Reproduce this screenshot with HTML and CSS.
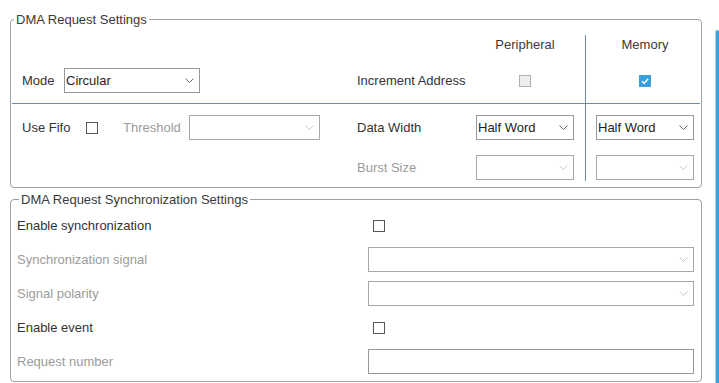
FILE: index.html
```html
<!DOCTYPE html>
<html lang="en">
<head>
    <meta charset="UTF-8">
    <meta name="viewport" content="width=device-width, initial-scale=1.0">
    <title>DMA Request Settings</title>
    <link rel="stylesheet" href="styles.css">
</head>
<body>
    <fieldset class="group dma">
        <legend>DMA Request Settings</legend>
        <div class="dma-grid">
            <!-- header row -->
            <div class="cell c1 r1"></div>
            <div class="cell c2 r1"></div>
            <div class="cell c3 r1 head">Peripheral</div>
            <div class="cell c4 r1 head">Memory</div>

            <!-- mode / increment -->
            <div class="cell c1 r2">
                <span class="lbl mode-lbl">Mode</span>
                <div class="select mode-sel">
                    <span>Circular</span>
                    <svg class="chev" width="9" height="5" viewBox="0 0 9 5"><polyline points="0.5,0.5 4.5,4.5 8.5,0.5"/></svg>
                </div>
            </div>
            <div class="cell c2 r2"><span class="lbl">Increment Address</span></div>
            <div class="cell c3 r2 mid"><span class="check disabled"></span></div>
            <div class="cell c4 r2 mid">
                <span class="check checked">
                    <svg width="12" height="12" viewBox="0 0 12 12"><polyline points="3,6.2 5.2,8.3 9,4"/></svg>
                </span>
            </div>

            <!-- fifo / data width -->
            <div class="cell c1 r3">
                <span class="lbl fifo-lbl">Use Fifo</span>
                <span class="check"></span>
                <span class="lbl muted thr-lbl">Threshold</span>
                <div class="select off thr-sel">
                    <span></span>
                    <svg class="chev" width="9" height="5" viewBox="0 0 9 5"><polyline points="0.5,0.5 4.5,4.5 8.5,0.5"/></svg>
                </div>
            </div>
            <div class="cell c2 r3"><span class="lbl">Data Width</span></div>
            <div class="cell c3 r3">
                <div class="select wide">
                    <span>Half Word</span>
                    <svg class="chev" width="9" height="5" viewBox="0 0 9 5"><polyline points="0.5,0.5 4.5,4.5 8.5,0.5"/></svg>
                </div>
            </div>
            <div class="cell c4 r3">
                <div class="select wide">
                    <span>Half Word</span>
                    <svg class="chev" width="9" height="5" viewBox="0 0 9 5"><polyline points="0.5,0.5 4.5,4.5 8.5,0.5"/></svg>
                </div>
            </div>

            <!-- burst size -->
            <div class="cell c1 r4"></div>
            <div class="cell c2 r4"><span class="lbl muted">Burst Size</span></div>
            <div class="cell c3 r4">
                <div class="select wide off">
                    <span></span>
                    <svg class="chev" width="9" height="5" viewBox="0 0 9 5"><polyline points="0.5,0.5 4.5,4.5 8.5,0.5"/></svg>
                </div>
            </div>
            <div class="cell c4 r4">
                <div class="select wide off">
                    <span></span>
                    <svg class="chev" width="9" height="5" viewBox="0 0 9 5"><polyline points="0.5,0.5 4.5,4.5 8.5,0.5"/></svg>
                </div>
            </div>
        </div>
    </fieldset>

    <fieldset class="group sync">
        <legend>DMA Request Synchronization Settings</legend>
        <div class="sync-grid">
            <span class="lbl">Enable synchronization</span>
            <div class="ctl"><span class="check box-offset"></span></div>

            <span class="lbl muted">Synchronization signal</span>
            <div class="select off full">
                <span></span>
                <svg class="chev" width="9" height="5" viewBox="0 0 9 5"><polyline points="0.5,0.5 4.5,4.5 8.5,0.5"/></svg>
            </div>

            <span class="lbl muted">Signal polarity</span>
            <div class="select off full">
                <span></span>
                <svg class="chev" width="9" height="5" viewBox="0 0 9 5"><polyline points="0.5,0.5 4.5,4.5 8.5,0.5"/></svg>
            </div>

            <span class="lbl">Enable event</span>
            <div class="ctl"><span class="check box-offset"></span></div>

            <span class="lbl muted">Request number</span>
            <div class="text-input"></div>
        </div>
    </fieldset>

    <div class="scrollbar"></div>
</body>
</html>
```

FILE: styles.css
```css
body {
    font-family: "Liberation Sans", Arial, sans-serif;
    font-size: 13px;
    color: #333;
    margin: 0;
    padding: 12px 0 0 10px;
    background: #fff;
}
.group {
    box-sizing: border-box;
    width: 692px;
    margin: 0;
    border: 1px solid #a0a0a0;
    border-radius: 4px;
    min-width: 0;
}
.group legend {
    line-height: 15px;
    padding: 0 2px;
    margin-left: 2px;
    color: #3a3a3a;
}
.dma {
    padding: 8px 1px 6px 1px;
}
.sync {
    margin-top: 4px;
    padding: 6px 7px 7px 6px;
}

/* DMA request settings grid */
.dma-grid {
    display: grid;
    grid-template-columns: 334px 120px 119px 115px;
    grid-template-rows: 20px 49px 44px 33px;
}
.cell {
    box-sizing: border-box;
    display: flex;
    align-items: center;
}
.c1 { padding-left: 10px; }
.c2 { padding-left: 11px; }
.c3 { padding-left: 10px; padding-right: 11px; }
.c4 { padding-left: 10px; padding-right: 6px; border-left: 1px solid #6a87c4; }
.r2 { padding-top: 13px; padding-bottom: 10px; border-bottom: 1px solid #6a87c4; }
.r3 { padding-top: 11px; padding-bottom: 8px; }
.r4 { padding-top: 7px; padding-bottom: 1px; }
.head {
    justify-content: center;
    line-height: 20px;
    color: #3a3a3a;
}
.mid {
    justify-content: center;
}

.lbl {
    line-height: 15px;
    white-space: nowrap;
}
.muted {
    color: #9b9b9b;
}
.mode-lbl { width: 42px; }
.fifo-lbl { width: 64px; }
.thr-lbl { width: 66px; margin-left: 25px; }

/* dropdowns */
.select {
    box-sizing: border-box;
    height: 25px;
    border: 1px solid #999;
    background: #fff;
    display: flex;
    align-items: center;
    justify-content: space-between;
    padding: 0 5px 0 1px;
    color: #1e1e1e;
}
.select .chev {
    fill: none;
    stroke: #6a6a6a;
    stroke-width: 1;
}
.select.off {
    border-color: #a8a8a8;
}
.select.off .chev {
    stroke: #c8c8c8;
}
.mode-sel { width: 136px; }
.thr-sel { width: 131px; }
.wide { width: 98px; }
.full { width: 326px; }

/* checkboxes */
.check {
    box-sizing: border-box;
    width: 12px;
    height: 12px;
    border: 1px solid #555;
    background: #fff;
    display: inline-block;
}
.check.disabled {
    border-color: #b0b0b0;
    background: #eeeef0;
}
.check.checked {
    border: none;
    background: #3a9fda;
}
.check.checked svg {
    display: block;
    fill: none;
    stroke: #fff;
    stroke-width: 1.4;
}

/* synchronization grid */
.sync-grid {
    display: grid;
    grid-template-columns: 351px 326px;
    grid-auto-rows: 25px;
    row-gap: 9px;
    align-items: center;
}
.ctl {
    display: flex;
    align-items: center;
    height: 25px;
}
.box-offset {
    margin-left: 5px;
}
.text-input {
    box-sizing: border-box;
    height: 25px;
    border: 1px solid #999;
    background: #fff;
}

.scrollbar {
    position: fixed;
    left: 715px;
    top: 30px;
    bottom: 0;
    width: 3px;
    border-left: 1px solid #a9d4ef;
    background: #3aa2dd;
    border-radius: 2px 2px 0 0;
}
```
